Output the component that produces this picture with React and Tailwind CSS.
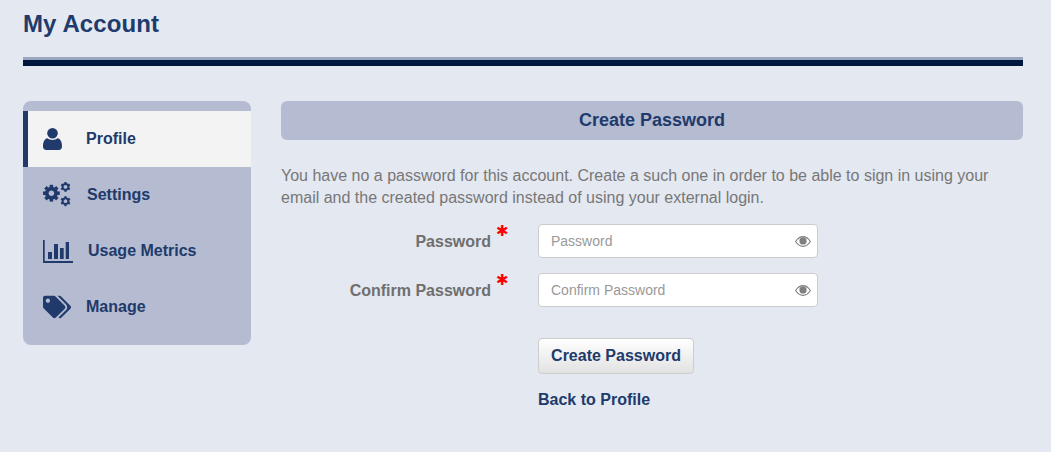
import React from 'react';
import { FaTags } from 'react-icons/fa';

const navy = 'text-[#203a6b]';

const UserIcon = () => (
  <svg width="19" height="22" viewBox="0 0 19 22" fill="currentColor">
    <circle cx="9.5" cy="5.3" r="5.3" />
    <path d="M0 18.5C0 14 1.5 10.8 4.5 10.3c1.3 1 3 1.6 5 1.6s3.700-.6 5-1.600c3 .5 4.500 3.700 4.500 8.200 0 2.200-1.300 3.500-3.300 3.500H3.300C1.300 22 0 20.700 0 18.500z" />
  </svg>
);

// one gear of the settings icon: a ring with teeth around it
const Gear = ({ cx, cy, ring, stroke, outer, tooth, count }) => (
  <g transform={`translate(${cx} ${cy})`}>
    <circle r={ring} fill="none" stroke="currentColor" strokeWidth={stroke} />
    {Array.from({ length: count }).map((_, i) => (
      <rect key={i} x={-tooth / 2} y={-outer} width={tooth} height={outer - ring} transform={`rotate(${(360 / count) * i})`} />
    ))}
  </g>
);

const CogsIcon = () => (
  <svg width="29" height="26" viewBox="0 0 29 26" fill="currentColor">
    <Gear cx={8.4} cy={11.2} ring={4.6} stroke={3.6} outer={8.4} tooth={3.5} count={8} />
    <Gear cx={22.5} cy={4.9} ring={2.9} stroke={2.1} outer={4.9} tooth={2.2} count={6} />
    <Gear cx={22.5} cy={19.2} ring={2.9} stroke={2.1} outer={5} tooth={2.2} count={6} />
  </svg>
);

const ChartIcon = () => (
  <svg width="30" height="23" viewBox="0 0 30 23" fill="currentColor">
    <rect x="0" y="0" width="1.7" height="23" />
    <rect x="0" y="21" width="30" height="2" />
    <rect x="5" y="12" width="4" height="7" />
    <rect x="11" y="4" width="4" height="15" />
    <rect x="17" y="8" width="3.7" height="11" />
    <rect x="22.7" y="2" width="3.3" height="17" />
  </svg>
);

const EyeIcon = () => (
  <svg width="16" height="11" viewBox="0 0 16 11" className="text-[#808080] shrink-0">
    <path d="M.6 5.5C2.800 2 5.300.6 8 .6s5.200 1.400 7.400 4.900C13.200 9 10.700 10.400 8 10.400S2.800 9 .6 5.500z" fill="none" stroke="currentColor" strokeWidth="1.100" />
    <circle cx="8" cy="4.900" r="3.600" fill="currentColor" />
  </svg>
);

const NavItem = ({ icon, label, gap, active }) => (
  <div className={`h-14 flex items-center font-bold text-base ${navy} ${active ? 'bg-[#f3f3f3] border-l-[5px] border-[#203a6b] pl-[15px]' : 'pl-5'}`}>
    <div className="w-[30px] flex justify-start shrink-0">{icon}</div>
    <span style={{ marginLeft: gap }}>{label}</span>
  </div>
);

const Field = ({ label, mb }) => (
  <div className={`flex items-center ${mb}`}>
    <div className="w-[210px] pt-[2px] text-right font-bold text-base text-[#6f6f6f]">{label}</div>
    <div className="w-[47px] relative self-stretch">
      <span className="absolute left-[5px] top-[-1px] text-[15px] leading-[16px] text-[#ff0000] font-['DejaVu_Sans',sans-serif]">✱</span>
    </div>
    <div className="w-[280px] h-[34px] bg-white border border-[#cccccc] rounded flex items-center justify-between pl-3 pr-[6px] text-sm text-[#999999]">
      <span>{label}</span>
      <EyeIcon />
    </div>
  </div>
);

export default function App() {
  return (
    <div className="w-[1051px] h-[452px] overflow-hidden bg-[#e4e8f1] px-[23px] pr-[28px] font-['Liberation_Sans',Arial,sans-serif]">
      <h1 className={`h-[57px] pt-[10px] text-2xl leading-7 font-bold tracking-[0.1px] ${navy}`}>My Account</h1>
      <div className="h-[3px] bg-[#9aa5bf]" />
      <div className="h-[6px] bg-[#00173d]" />

      <div className="flex mt-[35px] gap-[30px]">
        <nav className="w-[228px] h-[244px] bg-[#b5bbd1] rounded-lg pt-[10px] shrink-0">
          <NavItem active label="Profile" gap={13} icon={<UserIcon />} />
          <NavItem label="Settings" gap={14} icon={<CogsIcon />} />
          <NavItem label="Usage Metrics" gap={15} icon={<ChartIcon />} />
          <NavItem label="Manage" gap={13} icon={<FaTags className="text-[28px]" />} />
        </nav>

        <main className="flex-1">
          <div className={`h-[39px] pb-[1px] bg-[#b5bbd1] rounded-md flex items-center justify-center font-bold text-lg ${navy}`}>
            Create Password
          </div>
          <p className="mt-[25px] mb-[15px] text-base leading-[22px] text-[#777777]">
            You have no a password for this account. Create a such one in order to be able to sign in using your email and the created password instead of using your external login.
          </p>
          <Field label="Password" mb="mb-[15px]" />
          <Field label="Confirm Password" mb="mb-[31px]" />
          <div className="ml-[257px]">
            <button className={`block w-[156px] h-[36px] rounded border border-[#cccccc] bg-gradient-to-b from-white to-[#e2e2e2] font-bold text-base ${navy}`}>
              Create Password
            </button>
            <a className={`block mt-[16px] font-bold text-base leading-[20px] ${navy}`}>Back to Profile</a>
          </div>
        </main>
      </div>
    </div>
  );
}
